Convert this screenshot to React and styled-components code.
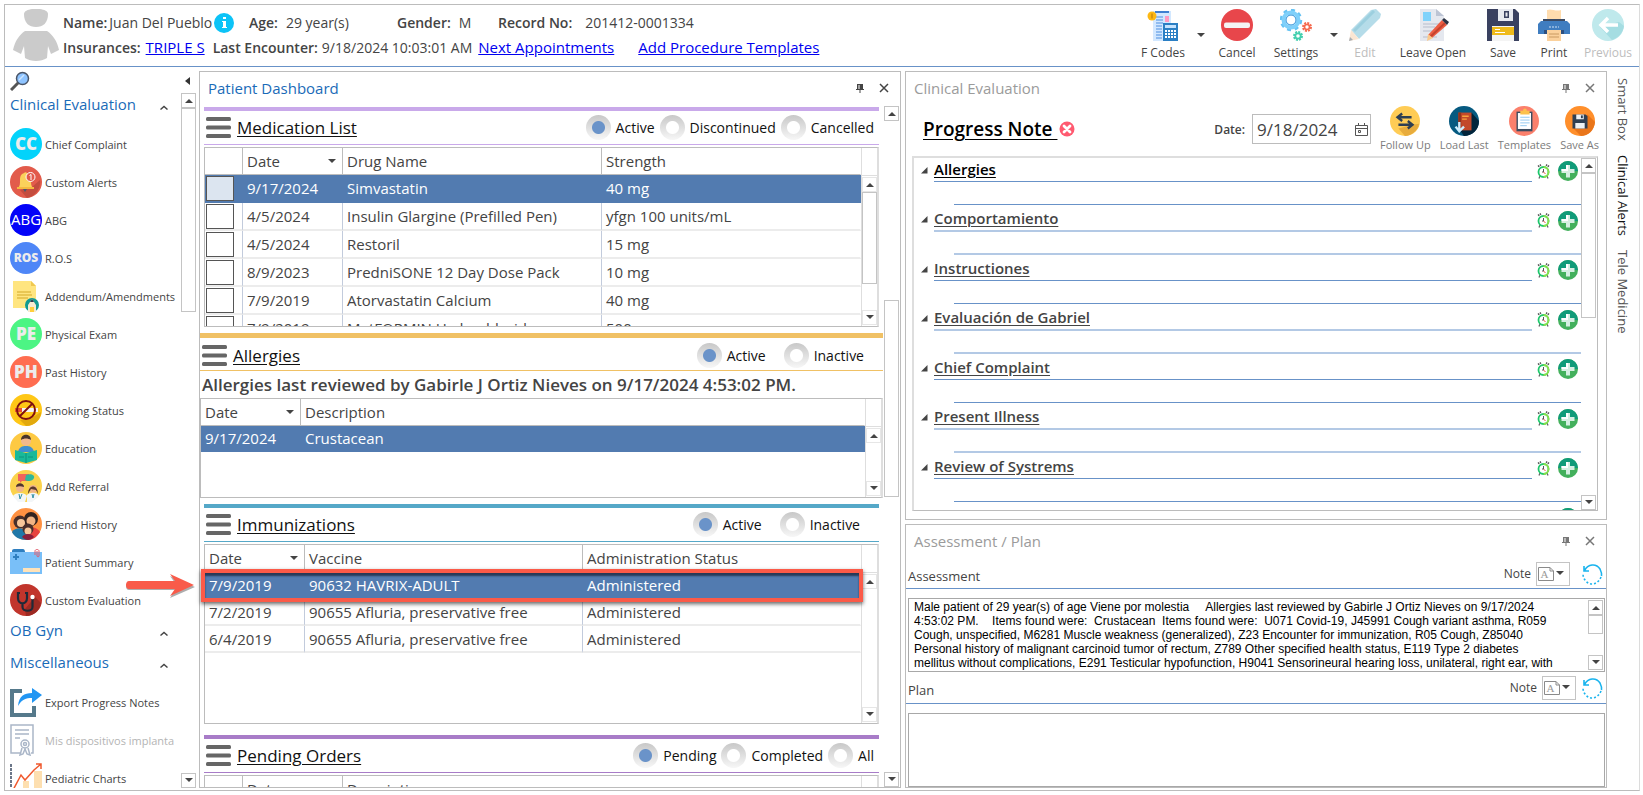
import React from 'react';
import styled, { createGlobalStyle, css } from 'styled-components';

const GlobalStyle = createGlobalStyle`
  * {
    box-sizing: border-box;
  }
  body {
    margin: 0;
    background: #fff;
    color: #444;
    font-family: 'Open Sans', 'Noto Sans', sans-serif;
    font-size: 15px;
  }
  button, input, textarea {
    font-family: inherit;
    color: inherit;
  }
  button {
    border: 0;
    padding: 0;
    background: none;
    cursor: pointer;
  }
  h1, h2, h3, p {
    margin: 0;
    font-weight: 400;
  }
  svg {
    display: block;
    flex: none;
  }
`;

const Page = styled.div`
  height: 100vh;
  padding: 4px 3px 4px 4px;
`;

const Frame = styled.div`
  height: 100%;
  display: flex;
  flex-direction: column;
  border: 1px solid #bcbcbc;
  border-right-color: #dcdcdc;
`;

/* ---------- header ---------- */

const Header = styled.header`
  display: flex;
  height: 62px;
  border-bottom: 1px solid #6892c8;
`;

const Avatar = styled.div`
  width: 58px;
  padding: 4px 0 0 8px;
`;

const Patient = styled.div`
  flex: 1;
  font-size: 15px;
  line-height: 25px;
  padding-top: 5px;
  white-space: nowrap;
`;

const PatientRow = styled.div`
  display: flex;
  align-items: center;
`;

const Field = styled.div`
  display: flex;
  align-items: center;
  gap: ${(props) => props.$gap || 0}px;
  width: ${(props) => (props.$width ? `${props.$width}px` : 'auto')};
  margin-right: ${(props) => props.$after || 0}px;
`;

const Label = styled.span`
  font-weight: 600;
  font-size: ${(props) => (props.$small ? 12 : 14)}px;
`;

const Value = styled.span`
  font-size: 14px;
`;

const Link = styled.a`
  color: #0000f0;
  font-size: 15px;
  margin-right: ${(props) => props.$after || 0}px;
`;

const Toolbar = styled.div`
  display: flex;
`;

const ToolButton = styled.button`
  width: ${(props) => props.$width}px;
  display: flex;
  flex-direction: column;
  align-items: center;
  padding-top: 4px;
  font-size: 12px;
  line-height: 24px;
  white-space: nowrap;
  color: ${(props) => (props.disabled ? '#bdbdbd' : '#444')};
`;

const CaretButton = styled.button`
  width: ${(props) => props.$width}px;
  display: flex;
  justify-content: center;
  padding-top: 28px;
`;

/* ---------- layout ---------- */

const Body = styled.div`
  flex: 1;
  min-height: 0;
  display: grid;
  grid-template-columns: 194px minmax(0, 1fr) 4px minmax(0, 1fr) 32px;
  grid-template-rows: minmax(0, 1fr);
  padding-bottom: 2px;
`;

const Column = styled.div`
  grid-column: ${(props) => props.$col};
  display: grid;
  grid-template-rows: ${(props) => props.$rows || 'minmax(0, 1fr)'};
  row-gap: 4px;
  padding-top: 4px;
`;

const Panel = styled.section`
  display: flex;
  flex-direction: column;
  min-height: 0;
  border: 1px solid #bcbcbc;
`;

const PanelTitle = styled.div`
  display: flex;
  align-items: center;
  height: ${(props) => props.$height || 34}px;
  padding: 0 11px 2px 8px;
  color: ${(props) => (props.$active ? '#1a6bb8' : '#9b9b9b')};

  h2 {
    flex: 1;
    font-size: 15px;
  }
  button {
    color: ${(props) => (props.$active ? '#444' : '#777')};
    margin-left: 14px;
  }
`;

/* ---------- scroll bar ---------- */

const Bar = styled.div`
  width: 15px;
  flex: none;
  display: flex;
  flex-direction: column;
`;

const BarButton = styled.button`
  height: 15px;
  flex: none;
  display: flex;
  align-items: center;
  justify-content: center;
  border: 1px solid ${(props) => (props.$soft ? '#e6e6e6' : '#c4c4c4')};
`;

const Track = styled.div`
  flex: ${(props) => props.$grow} 1 0;
`;

const Thumb = styled.div`
  flex: ${(props) => props.$grow} 1 0;
  border: 1px solid #c4c4c4;
  background: #fff;
`;

/* ---------- sidebar ---------- */

const Sidebar = styled.nav`
  display: flex;
  flex-direction: column;
  min-height: 0;
`;

const SidebarTop = styled.div`
  display: flex;
  justify-content: space-between;
  align-items: center;
  height: 26px;
  flex: none;
  padding: 2px 9px 0 5px;
`;

const SidebarBody = styled.div`
  flex: 1;
  min-height: 0;
  display: flex;
  padding-right: 3px;
`;

const SidebarList = styled.div`
  flex: 1;
  min-width: 0;
  overflow: hidden;
`;

const GroupTitle = styled.button`
  width: 100%;
  height: 32px;
  display: flex;
  justify-content: space-between;
  padding: 1px 13px 11px 5px;
  font-size: 15px;
  line-height: 20px;
  color: #1a6bb8;

  svg {
    margin-top: 11px;
  }
`;

const NavItem = styled.button`
  width: 100%;
  height: 38px;
  display: flex;
  align-items: center;
  gap: 3px;
  padding-left: 5px;
  font-size: 11px;
  white-space: nowrap;
  color: ${(props) => (props.disabled ? '#b4b4b4' : '#444')};
`;

/* ---------- dashboard ---------- */

const DashBody = styled.div`
  flex: 1;
  min-height: 0;
  display: flex;
`;

/* only the vertical overflow is cut, so that row markers can reach outside */
const DashContent = styled.div`
  flex: 1;
  min-width: 0;
  padding-top: 1px;
  overflow-x: visible;
  overflow-y: clip;
`;

const DashScroll = styled.div`
  display: flex;
  padding-right: 1px;
`;

const Section = styled.div`
  margin: ${(props) => (props.$wide ? '0 1px 6px 0' : '0 5px 6px 4px')};
  margin-bottom: ${(props) => props.$after || 6}px;
`;

const SectionHead = styled.div`
  display: flex;
  align-items: center;
  height: 38px;
  margin-bottom: ${(props) => (props.$wide ? 1 : 2)}px;
  padding: ${(props) => (props.$wide ? 3 : 0)}px
    ${(props) => (props.$loose ? 19 : 5)}px 0 2px;
  border-top: ${(props) => (props.$wide ? 5 : 4)}px solid
    ${(props) => props.$color};
  border-bottom: 1px solid ${(props) => props.$color};

  h3 {
    flex: 1;
    margin-left: 6px;
    font-size: 17px;
    color: #111;
    text-decoration: underline;
    text-underline-offset: 2px;
  }
`;

const Radios = styled.div`
  display: flex;
  gap: ${(props) => (props.$loose ? 18 : 5)}px;
`;

const RadioLabel = styled.label`
  display: flex;
  align-items: center;
  gap: 5px;
  font-size: 14px;
  color: #111;
`;

const Radio = styled.input.attrs({ type: 'radio' })`
  appearance: none;
  width: 25px;
  height: 25px;
  margin: 0;
  border-radius: 50%;
  background: radial-gradient(circle, #fff 6px, transparent 7px),
    linear-gradient(#c8c8c8, #f7f7f7);

  &:checked {
    background: radial-gradient(circle, #6a93c9 6px, transparent 7px),
      linear-gradient(#c8c8c8, #f7f7f7);
  }
`;

const Reviewed = styled.p`
  font-size: 17px;
  font-weight: 600;
  line-height: 26px;
  padding-left: 2px;
  white-space: nowrap;
`;

const GridBox = styled.div`
  display: flex;
  align-items: flex-start;
  height: ${(props) => props.$height}px;
  border: 1px solid #bcbcbc;
  border-right: 2px solid #dedede;
  overflow: ${(props) => (props.$open ? 'visible' : 'hidden')};
`;

const Table = styled.table`
  flex: 1;
  width: 0;
  table-layout: fixed;
  border-collapse: separate;
  border-spacing: 0;
  font-size: 15px;
`;

const Th = styled.th`
  width: ${(props) => (props.$width ? `${props.$width}px` : 'auto')};
  height: 27px;
  padding: 0 6px 0 4px;
  text-align: left;
  font-weight: 400;
  border-right: 1px solid #bcbcbc;
  border-bottom: 1px solid #bcbcbc;

  &:last-child {
    border-right-color: transparent;
  }
  div {
    display: flex;
    align-items: center;
    justify-content: space-between;
  }
`;

const Td = styled.td`
  height: ${(props) => props.$rowHeight}px;
  padding: 0 4px;
  line-height: 20px;
  white-space: nowrap;
  border-right: 1px solid #c2cbdc;
  border-bottom: 2px solid #ececec;

  &:last-child {
    border-right-color: transparent;
  }
`;

const Tr = styled.tr`
  position: relative;
  ${(props) =>
    props.$selected &&
    css`
      color: #fff;

      ${Td} {
        background: #527bb0;
        border-color: #527bb0;
      }
    `}
`;

const Check = styled.input.attrs({ type: 'checkbox' })`
  appearance: none;
  display: block;
  width: 28px;
  height: 25px;
  margin: 0 0 0 -3px;
  border: 1px solid #555;
  background: ${(props) => (props.$selected ? '#dce5f0' : '#fff')};
`;

const Rail = styled.div`
  width: 16px;
  height: 100%;
  display: flex;
  flex-direction: column;
  border-left: 1px solid #dedede;

  &::before {
    content: '';
    height: 27px;
    flex: none;
    border-bottom: 1px solid #dedede;
  }
  ${Bar} {
    flex: 1;
    padding: 1px 0;
  }
`;

const RowMark = styled.span`
  position: absolute;
  z-index: 2;
  inset: -3px -2px -3px -4px;
  border: 4px solid #fb5a48;
  box-shadow: 0 2px 4px rgba(0, 0, 0, 0.6),
    inset 0 3px 2px rgba(20, 30, 50, 0.7);
`;

const RowArrow = styled.svg`
  position: absolute;
  z-index: 2;
  right: calc(100% + 10px);
  top: 0;
`;

/* ---------- progress note ---------- */

const NoteHead = styled.div`
  display: flex;
  justify-content: space-between;
  height: 50px;
  padding: 0 7px 0 17px;
`;

const NoteTitle = styled.div`
  display: flex;
  align-items: center;
  gap: 2px;
  height: 46px;

  h1 {
    font-size: 19px;
    font-weight: 600;
    color: #000;
    text-decoration: underline;
    text-underline-offset: 3px;
    white-space: pre;
  }
`;

const NoteTools = styled.div`
  display: flex;
  gap: 9px;
`;

const DateLabel = styled.label`
  display: flex;
  align-items: center;
  height: 46px;
`;

const DateBox = styled.div`
  display: flex;
  align-items: center;
  width: 119px;
  height: 30px;
  margin: 8px 0 0 -2px;
  padding: 0 2px 0 4px;
  border: 1px solid #bcbcbc;

  input {
    flex: 1;
    width: 0;
    padding: 0;
    border: 0;
    outline: 0;
    font-size: 17px;
  }
`;

const RoundTool = styled.button`
  display: flex;
  flex-direction: column;
  align-items: center;
  font-size: 11px;
  line-height: 18px;
  color: #7c7c7c;
  white-space: nowrap;
`;

const Tree = styled.div`
  flex: 1;
  min-height: 0;
  display: flex;
  margin: 0 8px 8px 6px;
  padding-right: 1px;
  border: 1px solid #bcbcbc;
  border-top: 2px solid #dedede;
  border-left: 2px solid #dedede;
`;

const TreeList = styled.div`
  flex: 1;
  overflow: hidden;
`;

const TreeHead = styled.div`
  display: flex;
  height: 24px;

  > button {
    width: 20px;
    display: flex;
    align-items: center;
    justify-content: center;
  }
  h3 {
    flex: 1;
    font-size: 15px;
    font-weight: 600;
    line-height: 22px;
    text-decoration: underline;
    text-underline-offset: 2px;
    border-bottom: 1px solid #6892c8;
  }
`;

const TreeActions = styled.div`
  width: 49px;
  display: flex;
  align-items: center;
  justify-content: space-between;
  padding: 2px 3px 0 5px;
`;

const TreeBody = styled.div`
  height: 23px;
  margin-left: 40px;
  border-bottom: 1px solid #6892c8;
`;

const TreeItem = styled.div`
  padding-bottom: 2px;
  color: ${(props) => (props.$current ? '#000' : '#444')};

  &:nth-child(even) ${TreeHead} {
    height: 25px;
  }
  &:nth-child(even) h3,
  &:nth-child(even) ${TreeBody} {
    border-bottom: 2px solid #b3c9e5;
  }
`;

/* ---------- assessment ---------- */

const NoteBar = styled.div`
  display: flex;
  align-items: center;
  height: ${(props) => props.$height}px;
  padding: 0 3px 0 2px;
  border-bottom: 1px solid #6892c8;

  label {
    flex: 1;
    font-size: 13px;
    padding-top: 5px;
  }
  > span {
    font-size: 12px;
  }
`;

const NoteMenu = styled.button`
  display: flex;
  align-items: center;
  justify-content: space-between;
  width: 34px;
  height: 24px;
  margin: 0 ${(props) => props.$after}px 0 5px;
  padding: 0 5px 0 1px;
  border: 1px solid #c4c4c4;
`;

const NoteBox = styled.div`
  display: flex;
  height: 74px;
  margin: 9px 1px 0 2px;
  padding: 1px;
  border: 1px solid #a8a8a8;

  textarea {
    flex: 1;
    padding: 0 4px;
    border: 0;
    outline: 0;
    resize: none;
    overflow: hidden;
    color: #000;
    font-family: 'Liberation Sans', Arial, sans-serif;
    font-size: 12px;
    line-height: 14px;
    white-space: pre;
  }
`;

const SideTabs = styled.div`
  grid-column: 5;
  display: flex;
  flex-direction: column;
  align-items: center;
  gap: 14px;
  padding-top: 11px;
`;

const SideTab = styled.button`
  writing-mode: vertical-rl;
  font-size: 13px;
  line-height: 20px;
  color: ${(props) => (props.$current ? '#111' : '#555')};
`;

/* ---------- small glyphs ---------- */

const Caret = ({ up }) => (
  <svg width="8" height="5" viewBox="0 0 8 5">
    <path d={up ? 'M0 5 4 1l4 4z' : 'M0 0h8L4 4z'} fill="#444" />
  </svg>
);

const Pin = () => (
  <svg width="10" height="10" viewBox="0 0 10 10">
    <path d="M2 1h6v5h1v1H1V6h1zM4.500 7h1v3h-1z" fill="currentColor" />
    <path d="M3 2h2v4H3z" fill="#fff" opacity=".5" />
  </svg>
);

const Close = () => (
  <svg width="10" height="10" viewBox="0 0 10 10">
    <path d="m1 1 8 8M9 1 1 9" stroke="currentColor" strokeWidth="1.500" />
  </svg>
);

const Menu = () => (
  <svg width="25" height="22" viewBox="0 0 25 22" fill="#666">
    <rect width="25" height="4" rx="1.500" />
    <rect y="8.500" width="25" height="4" rx="1.500" />
    <rect y="17" width="25" height="4" rx="1.500" />
  </svg>
);

const AvatarIcon = () => (
  <svg width="46" height="52" viewBox="0 0 46 52" fill="#cbcbcb">
    <path d="M11 5c0-7 24-7 24 0 0 9-5 13-12 13S11 14 11 5z" />
    <path d="M12 22h22c6 4 10 10 12 19l-8 4-3-8-1 12c-6 4-16 4-22 0l-1-12-3 8-8-4c2-9 6-15 12-19z" />
  </svg>
);

const Info = () => (
  <svg width="20" height="20" viewBox="0 0 20 20">
    <circle cx="10" cy="10" r="10" fill="#0cc3f7" />
    <path d="M9 4h3v2H9zM8 8h4v6h1v1H8v-1h1V9H8z" fill="#fff" />
  </svg>
);

const SearchIcon = () => (
  <svg width="20" height="20" viewBox="0 0 20 20">
    <path d="M9 11 1 19" stroke="#555" strokeWidth="3" />
    <circle cx="12.500" cy="7.500" r="6" fill="#8fc4ff" stroke="#4a5568" strokeWidth="1.500" />
    <path d="m9 9 5-5" stroke="#cfe6ff" strokeWidth="1.500" />
  </svg>
);

const Calendar = () => (
  <svg width="13" height="13" viewBox="0 0 13 13" fill="none" stroke="#555">
    <path d="M.5 2.500h12v10H.5zM.5 5.500h12M3.500 0v3M9.500 0v3M3.500 7.500h2v2h-2z" />
  </svg>
);

const RedCross = () => (
  <svg width="16" height="16" viewBox="0 0 16 16">
    <circle cx="8" cy="8" r="7.500" fill="#ff5a70" />
    <path d="m5 5 6 6M11 5l-6 6" stroke="#fff" strokeWidth="2.800" strokeLinecap="round" />
  </svg>
);

const Clock = () => (
  <svg width="13" height="15" viewBox="0 0 13 15">
    <path d="M1 2.500 4 .8M12 2.500 9 .8" stroke="#555" strokeWidth="1.800" strokeDasharray="1.500 .7" />
    <path d="m3 12-1 2.500M10 12l1 2.500" stroke="#666" strokeWidth="1.300" />
    <circle cx="6.500" cy="8" r="5" fill="#fff" stroke="#1dc76b" strokeWidth="1.800" />
    <path d="M6.500 3a5 5 0 0 1 0 10" fill="none" stroke="#8be04a" strokeWidth="1.800" />
    <path d="M6.500 5v3H5" fill="none" stroke="#555" />
    <path d="m6.500 8 2 2" stroke="#e8573f" />
  </svg>
);

const Plus = () => (
  <svg width="20" height="20" viewBox="0 0 20 20">
    <circle cx="10" cy="10" r="10" fill="#43b05c" />
    <path d="M0 10a10 10 0 0 1 20 0z" fill="#109b79" />
    <path d="M8 4h4v4h4.500v4H12v4.500H8V12H3.500V8H8z" fill="#d5efe2" />
    <path d="M8 4h2v6H3.500V8H8z" fill="#fff" />
  </svg>
);

const Twisty = () => (
  <svg width="7" height="7" viewBox="0 0 7 7">
    <path d="M6.500 0v6.500H0z" fill="#444" />
  </svg>
);

const NotePage = () => (
  <svg width="17" height="14" viewBox="0 0 17 14" fill="none" stroke="#8a8a8a">
    <path d="M.5.5H12l3.500 3.500v9.500H.5zM12 .5V4h3.500" />
    <text x="2.500" y="11" fontFamily="Liberation Serif" fontSize="11" fill="#999" stroke="none">A</text>
  </svg>
);

const Redo = () => (
  <svg width="21" height="22" viewBox="0 0 21 22" fill="none" stroke="#1ab4ee" strokeWidth="1.600">
    <path d="M2 3v5h5M2.500 7.500C6 1 14 0 18 6c1 2 2 4 1.500 7" />
    <path d="M19 14c-2 5-6 7-9 7-5 0-9-5-9-10" strokeDasharray="2 2" />
  </svg>
);

const Fold = () => (
  <svg width="8" height="5" viewBox="0 0 8 5">
    <path d="m.5 4.500 3.500-3 3.500 3" fill="none" stroke="#444" strokeWidth="1.400" />
  </svg>
);

/* ---------- pictures on the buttons ---------- */

const Lettered = ({ fill, children, size = 15, weight = 800, color = '#ececec' }) => (
  <>
    <circle cx="16" cy="16" r="16" fill={fill} />
    <text x="16" y={16 + size * 0.36} fontSize={size} fontWeight={weight} fill={color} textAnchor="middle">
      {children}
    </text>
  </>
);

const art = {
  cc: <Lettered fill="#03d3fb" size={17}>CC</Lettered>,
  alerts: (
    <>
      <circle cx="16" cy="16" r="16" fill="#e25b4b" />
      <path d="m22 21 8-7a16 16 0 0 1-13 18l-7-8z" fill="#c44c3e" />
      <path d="M8 22c2-2 2-4 2-8 0-5 2-6 4-7 1-1 2-1 3 0 3 1 4 3 4 7s0 6 2 8z" fill="#fbd15b" />
      <path d="M7 21h17v2H7z" fill="#f5b93f" />
      <path d="M13 23h4l-2 3z" fill="#4b5a6b" />
      <circle cx="20.500" cy="11" r="4.500" fill="#e25b4b" stroke="#fff" />
      <path d="M19.500 9.500 21 8.500V14" fill="none" stroke="#fff" />
    </>
  ),
  abg: <Lettered fill="#0303f8" size={15} weight={400} color="#fff">ABG</Lettered>,
  ros: <Lettered fill="#4e86f7" size={12}>ROS</Lettered>,
  addendum: (
    <>
      <path d="M3 1h18l5 5v22H3z" fill="#ffe580" />
      <path d="M21 1v5h5z" fill="#f0c850" />
      <path d="M7 12h14M7 15h15M7 18h11" stroke="#d4a928" strokeWidth="1.200" />
      <circle cx="22" cy="25" r="7" fill="#119a92" />
      <path d="m22 19 4 6v7h-8v-7z" fill="#f7ead0" />
      <path d="m22 19 2 3h-4z" fill="#2d3e50" />
      <path d="M20 27h4v5h-4z" fill="#ffcf3d" />
    </>
  ),
  pe: <Lettered fill="#4cf584" size={17}>PE</Lettered>,
  ph: <Lettered fill="#ff6d50" size={17}>PH</Lettered>,
  smoking: (
    <>
      <circle cx="16" cy="16" r="16" fill="#ffc716" />
      <path d="m23 23 8-5c0 8-7 14-15 14l-6-6z" fill="#e2a90d" />
      <path d="M11 14h17v4H11z" fill="#f4f4f4" />
      <path d="M5 14h7v4H5z" fill="#e8502f" />
      <circle cx="16" cy="16" r="9" fill="none" stroke="#7f1010" strokeWidth="2" />
      <path d="m22 10-12 12" stroke="#7f1010" strokeWidth="2" />
    </>
  ),
  education: (
    <>
      <circle cx="16" cy="16" r="16" fill="#fdc943" />
      <path d="M8 20c1-5 4-6 8-6s7 1 8 6z" fill="#3f8fd0" />
      <circle cx="16" cy="9" r="5" fill="#f3b98c" />
      <path d="M11 8c0-7 10-7 10 0-3-2-7-2-10 0z" fill="#4a352c" />
      <path d="m5 18 11 3 11-3v10l-11 3-11-3z" fill="#19b99a" />
      <path d="M16 21v10M14 25H9M18 25h5" stroke="#0d947a" />
    </>
  ),
  referral: (
    <>
      <circle cx="16" cy="16" r="16" fill="#fbd24c" />
      <path d="M8 4h11v7H12l-2 2v-2H8z" fill="#f0635c" />
      <path d="M16 5c5-2 9 0 8 3s-6 4-9 2z" fill="#2fb79b" />
      <circle cx="10" cy="18" r="4" fill="#f0b58a" />
      <path d="M6 17c0-5 8-5 8 0-3-1-5-1-8 0z" fill="#4e342e" />
      <circle cx="23" cy="19" r="4" fill="#f0b58a" />
      <path d="M18 24c0-10 10-10 10 0l-2-4-5-1z" fill="#5b3a2e" />
      <path d="M3 26c2-4 12-4 14 0l-2 6H8zM17 25c3-3 10-3 12 1l-7 6h-5z" fill="#f3f6f8" />
      <path d="m9 24 1 5 2-5M22 24l1 4 1-4" stroke="#3290a5" fill="none" />
    </>
  ),
  friend: (
    <>
      <circle cx="16" cy="16" r="16" fill="#ff9142" />
      <circle cx="10" cy="14" r="6.500" fill="#4a2f2b" />
      <circle cx="21" cy="11" r="7" fill="#33231f" />
      <circle cx="11" cy="15" r="4" fill="#f8c79a" />
      <circle cx="21" cy="13" r="4.500" fill="#f1b484" />
      <path d="M2 24c3-5 12-5 15 0v8C10 32 4 29 2 24z" fill="#2078a8" />
      <path d="M17 22c4-4 10-3 13 2-3 5-7 8-13 8z" fill="#e7443f" />
      <circle cx="18" cy="21" r="5.500" fill="#4a2f2b" />
      <circle cx="18" cy="23" r="3.500" fill="#f8c79a" />
      <path d="M12 29c2-4 10-4 12 0-4 4-8 4-12 0z" fill="#8a1f3c" />
    </>
  ),
  summary: (
    <>
      <path d="M2 5c0-2 2-2 3-2h8c1 0 2 1 2 3v3H2z" fill="#2f7fc0" />
      <path d="M0 6h32v22H0z" fill="#79bff8" />
      <path d="M3 11h6M6 8v6" stroke="#2f7fc0" strokeWidth="2" />
      <path d="M13 22h17v4H13z" fill="#ffe2b8" />
      <path d="M25 9V5c0-2 4-2 4 0v5c0 1-2 1-2 0V5" fill="none" stroke="#e25b6b" />
    </>
  ),
  custom: (
    <>
      <circle cx="16" cy="16" r="16" fill="#c1352c" />
      <path d="m15 25 10-12 6 6c-1 7-7 13-15 13z" fill="#9c2a23" />
      <path d="M10 9H8v5c0 7 9 7 9 0V9h-2M12.500 19v4c0 5 10 5 10 0v-8" fill="none" stroke="#1f2a38" strokeWidth="2.200" />
      <circle cx="22.500" cy="13" r="2.200" fill="#fff" />
    </>
  ),
  exportNotes: (
    <>
      <path d="M12 5H2v24h22v-9" fill="none" stroke="#55798b" strokeWidth="4" />
      <path d="M8 20C9 10 14 7 22 7V2l10 7-10 8v-5c-6 0-10 1-14 8z" fill="#2196f3" />
    </>
  ),
  device: (
    <g fill="none" stroke="#aab6c8" strokeWidth="1.500">
      <path d="M11 29H1V1h22v28h-2M5 6h14M5 10h14M5 14h5" />
      <circle cx="15" cy="20" r="4" />
      <circle cx="15" cy="20" r="1.500" />
      <path d="m12 24-2 7 3-1 2-5 2 5 3 1-2-7" />
    </g>
  ),
  charts: (
    <>
      <path d="M13 19h6v13h-6zM24 9h8v23h-8z" fill="#fddfb0" />
      <path d="M1 2v30" stroke="#3b4a63" strokeDasharray="3 1" strokeWidth="1.500" />
      <path d="m2 30 9-17 4 5L24 8l7-6M26 2h5v5" fill="none" stroke="#f0592e" strokeWidth="1.500" />
    </>
  ),
  fcodes: (
    <>
      <path d="M6 2h18v30H6z" fill="#d3e8ff" />
      <path d="M8 3h14" stroke="#3f7fd0" strokeWidth="2" />
      <path d="M9 8h7M9 11h7M9 14h7M9 17h6M9 20h6M9 23h6M9 26h6M9 29h6" stroke="#4c8fe0" />
      <path d="M18 7h4v6h-4z" fill="#ff9ac0" />
      <circle cx="5" cy="7" r="4.500" fill="#fdb813" />
      <path d="M5 4.500v5" stroke="#b97708" />
      <path d="M16 14h15v18H16z" fill="#2b7fc4" />
      <path d="M18 16h11v3H18z" fill="#c5e3ff" />
      <path d="M18 22h11M18 25h11M18 28h11" stroke="#fff" strokeWidth="2" strokeDasharray="2 1" />
    </>
  ),
  cancel: (
    <>
      <circle cx="16" cy="16" r="16" fill="#e8464b" />
      <rect x="3" y="13.500" width="26" height="5.500" rx="2" fill="#f4f4f4" />
    </>
  ),
  settings: (
    <g fill="none">
      <circle cx="11" cy="11" r="10" stroke="#67c3f3" strokeWidth="2.500" strokeDasharray="4 3.800" />
      <circle cx="11" cy="11" r="7.500" stroke="#7fd0fa" strokeWidth="4" />
      <circle cx="11" cy="11" r="5" stroke="#2a8fd8" />
      <circle cx="27" cy="18" r="4" stroke="#f5694e" strokeWidth="2" strokeDasharray="2 1.100" />
      <circle cx="27" cy="18" r="2.500" stroke="#f5694e" strokeWidth="1.600" />
      <circle cx="18" cy="27" r="4" stroke="#43cfae" strokeWidth="2" strokeDasharray="2 1.100" />
      <circle cx="18" cy="27" r="2.700" stroke="#43cfae" strokeWidth="1.800" />
    </g>
  ),
  edit: (
    <>
      <path d="m2 21 8 9L31 9l1-4-5-5-5 1z" fill="#b5dce9" />
      <path d="m5 22 20-20" stroke="#9ccfdf" strokeWidth="3" />
      <path d="m2 21 8 9-10 2z" fill="#fbe6d3" />
      <path d="m1 28 3 3-4 1z" fill="#a8aeb4" />
    </>
  ),
  leaveOpen: (
    <>
      <path d="M3 0h16l8 7v25H3z" fill="#e5e8ef" />
      <path d="M19 0v7h8z" fill="#bcc4d4" />
      <path d="M6 3h8v9H6z" fill="#7fd2fb" />
      <path d="M6 18h12M6 22h9M6 28h14M6 15h16" stroke="#b7bdcc" />
      <path d="m11 26 14-15 5 5-15 13z" fill="#ed5d43" />
      <path d="m13 28 15-14" stroke="#c3432f" strokeWidth="2" />
      <path d="m25 11 2-2 5 4-2 3z" fill="#2d3344" />
      <path d="m11 25 5 4-6 3z" fill="#fbc98c" />
    </>
  ),
  save: (
    <>
      <path d="M0 0h28l4 4v28H0z" fill="#3a4160" />
      <path d="M6 0h20v12H6z" fill="#e8eaf0" />
      <path d="M6 0h5v12H6zM17 2h5v7h-5z" fill="#3a4160" />
      <path d="M18.500 3.500h2v4h-2z" fill="#e8eaf0" />
      <path d="M5 17h22v15H5z" fill="#f4f4f4" />
      <path d="M5 18h22v8H5z" fill="#efba1a" />
      <path d="M8 20.500h5M8 23.500h10" stroke="#fff" />
    </>
  ),
  print: (
    <>
      <path d="M9 1c5-2 8 2 14 0v12H9z" fill="#ffdcae" />
      <path d="M5 10h22v6H5z" fill="#3b4a63" />
      <path d="M3 12h26l3 3v10H0V15z" fill="#3f7dc0" />
      <path d="M6 21h20v4H6z" fill="#2c4f80" />
      <path d="M9 21h14v11H9z" fill="#fbd19c" />
      <path d="M11 18h10" stroke="#cfe2f5" strokeDasharray="2 1" />
      <path d="M11 25h10M11 28h10" stroke="#c99a63" />
    </>
  ),
  previous: (
    <>
      <circle cx="16" cy="16" r="16" fill="#bfe9ec" />
      <path d="m8 18 12 13c6-2 11-7 12-14l-5-4z" fill="#a5dde2" />
      <path d="M26 16H10M16 9l-7 7 7 7" fill="none" stroke="#fff" strokeWidth="3.500" />
    </>
  ),
  followUp: (
    <>
      <circle cx="16" cy="16" r="16" fill="#ffcc55" />
      <path d="m24 20 7-1c-1 7-8 13-15 13l-7-8z" fill="#e8ac3d" />
      <path d="M23 12H10M13 8l-5 4 5 4M9 20h13M19 16l5 4-5 4" fill="none" stroke="#2f3f52" strokeWidth="2.500" />
    </>
  ),
  loadLast: (
    <>
      <circle cx="16" cy="16" r="16" fill="#065a80" />
      <path d="m24 7 8 9c0 9-7 16-16 16l-4-6z" fill="#02253b" />
      <path d="M10 7h14v19H10z" fill="#c2492a" />
      <path d="M10 7h3v19h-3z" fill="#92331b" />
      <path d="M14 11h7M14 14h5" stroke="#f9a33c" strokeWidth="1.500" />
      <path d="M11 17v8M7 22l4 5 5-5" fill="none" stroke="#cdefff" strokeWidth="2.500" />
    </>
  ),
  templates: (
    <>
      <circle cx="16" cy="16" r="16" fill="#fb806c" />
      <path d="M8 6h17v21H8z" fill="#3c4c60" />
      <path d="M9.500 7.500h14v17h-14z" fill="#fff" />
      <path d="M12 12h10M12 15h10M12 18h10M12 21h7" stroke="#8ec7f0" />
      <path d="M12 5h3c0-3 4-3 4 0h3v4H12z" fill="#fdc14c" />
    </>
  ),
  saveAs: (
    <>
      <circle cx="16" cy="16" r="16" fill="#ff8f2b" />
      <path d="m24 9 8 8c-1 9-7 15-15 15l-8-8z" fill="#e9751a" />
      <path d="M8 9h14l2 2v13H8z" fill="#2f3f52" />
      <path d="M12 9h8v5h-8zM11 18h10v6H11z" fill="#edf1f4" />
      <path d="M17 10h2v3h-2z" fill="#2f3f52" />
    </>
  ),
};

const Art = ({ name, size = 32 }) => (
  <svg width={size} height={size} viewBox="0 0 32 32">
    {art[name]}
  </svg>
);

/* ---------- data ---------- */

const groups = [
  {
    title: 'Clinical Evaluation',
    items: [
      ['cc', 'Chief Complaint'],
      ['alerts', 'Custom Alerts'],
      ['abg', 'ABG'],
      ['ros', 'R.O.S'],
      ['addendum', 'Addendum/Amendments'],
      ['pe', 'Physical Exam'],
      ['ph', 'Past History'],
      ['smoking', 'Smoking Status'],
      ['education', 'Education'],
      ['referral', 'Add Referral'],
      ['friend', 'Friend History'],
      ['summary', 'Patient Summary'],
      ['custom', 'Custom Evaluation'],
    ],
  },
  { title: 'OB Gyn', items: [] },
  {
    title: 'Miscellaneous',
    items: [
      ['exportNotes', 'Export Progress Notes'],
      ['device', 'Mis dispositivos implanta', true],
      ['charts', 'Pediatric Charts'],
    ],
  },
];

const medications = [
  ['9/17/2024', 'Simvastatin', '40 mg'],
  ['4/5/2024', 'Insulin Glargine (Prefilled Pen)', 'yfgn 100 units/mL'],
  ['4/5/2024', 'Restoril', '15 mg'],
  ['8/9/2023', 'PredniSONE 12 Day Dose Pack', '10 mg'],
  ['7/9/2019', 'Atorvastatin Calcium', '40 mg'],
  ['7/9/2019', 'MetFORMIN Hydrochloride', '500 mg'],
];

const immunizations = [
  ['7/9/2019', '90632 HAVRIX-ADULT', 'Administered'],
  ['7/2/2019', '90655 Afluria, preservative free', 'Administered'],
  ['6/4/2019', '90655 Afluria, preservative free', 'Administered'],
];

const noteSections = [
  'Allergies',
  'Comportamiento',
  'Instructiones',
  'Evaluación de Gabriel',
  'Chief Complaint',
  'Present Illness',
  'Review of Systrems',
  'Family History',
];

const assessment = [
  'Male patient of 29 year(s) of age Viene por molestia     Allergies last reviewed by Gabirle J Ortiz Nieves on 9/17/2024',
  '4:53:02 PM.    Items found were:  Crustacean  Items found were:  U071 Covid-19, J45991 Cough variant asthma, R059',
  'Cough, unspecified, M6281 Muscle weakness (generalized), Z23 Encounter for immunization, R05 Cough, Z85040',
  'Personal history of malignant carcinoid tumor of rectum, Z789 Other specified health status, E119 Type 2 diabetes',
  'mellitus without complications, E291 Testicular hypofunction, H9041 Sensorineural hearing loss, unilateral, right ear, with',
].join('\n');

/* ---------- components ---------- */

const ScrollBar = ({ before = 0, thumb = 0, after = 1, soft }) => (
  <Bar>
    <BarButton $soft={soft} aria-label="Scroll up">
      <Caret up />
    </BarButton>
    {before > 0 && <Track $grow={before} />}
    {thumb > 0 && <Thumb $grow={thumb} />}
    <Track $grow={after} />
    <BarButton $soft={soft} aria-label="Scroll down">
      <Caret />
    </BarButton>
  </Bar>
);

const PanelHeader = ({ title, active, height }) => (
  <PanelTitle $active={active} $height={height}>
    <h2>{title}</h2>
    <button aria-label="Pin panel">
      <Pin />
    </button>
    <button aria-label="Close panel">
      <Close />
    </button>
  </PanelTitle>
);

const SectionHeader = ({ title, color, options, loose, wide }) => (
  <SectionHead $color={color} $loose={loose} $wide={wide}>
    <button aria-label={`${title} menu`}>
      <Menu />
    </button>
    <h3>{title}</h3>
    <Radios $loose={loose}>
      {options.map((option, i) => (
        <RadioLabel key={option}>
          <Radio name={title} defaultChecked={i === 0} />
          {option}
        </RadioLabel>
      ))}
    </Radios>
  </SectionHead>
);

const DataGrid = ({ columns, rows, height, rowHeight = 26, checks, marked, scroll }) => (
  <GridBox $height={height} $open={marked}>
    <Table>
      <thead>
        <tr>
          {checks && <Th $width={38} aria-label="Select" />}
          {columns.map((name, i) => (
            <Th key={name} $width={i === 0 ? 100 : undefined}>
              <div>
                {name}
                {i === 0 && <Caret />}
              </div>
            </Th>
          ))}
        </tr>
      </thead>
      <tbody>
        {rows.map((row, r) => (
          <Tr key={r} $selected={r === 0}>
            {checks && (
              <Td $rowHeight={rowHeight}>
                <Check $selected={r === 0} aria-label={`Select ${row[1]}`} />
              </Td>
            )}
            {row.map((cell, i) => (
              <Td key={i} $rowHeight={rowHeight}>
                {cell}
                {marked && r === 0 && i === 0 && (
                  <>
                    <RowMark />
                    <RowArrow width="70" height="27" viewBox="0 0 70 27">
                      <path d="M4 11h46L45 4l25 11-25 11 5-8H4c-4 0-4-7 0-7z" fill="#777" opacity=".6" />
                      <path d="M4 9h46L45 2l24 11-24 11 5-7H4c-4 0-4-8 0-8z" fill="#f95b4a" />
                    </RowArrow>
                  </>
                )}
              </Td>
            ))}
          </Tr>
        ))}
      </tbody>
    </Table>
    <Rail>{scroll}</Rail>
  </GridBox>
);

const NoteEditor = ({ id, title, height, after, value, scroll }) => (
  <>
    <NoteBar $height={height}>
      <label htmlFor={id}>{title}</label>
      <span>Note</span>
      <NoteMenu $after={after} aria-label={`${title} note template`}>
        <NotePage />
        <Caret />
      </NoteMenu>
      <button aria-label={`Reload ${title}`}>
        <Redo />
      </button>
    </NoteBar>
    <NoteBox>
      <textarea id={id} defaultValue={value} />
      {scroll}
    </NoteBox>
  </>
);

const App = () => {
  return (
    <Page>
      <GlobalStyle />
      <Frame>
        <Header>
          <Avatar>
            <AvatarIcon />
          </Avatar>
          <Patient>
            <PatientRow>
              <Field $width={186} $gap={2}>
                <Label>Name:</Label>
                <Value>Juan Del Pueblo</Value>
                <Info />
              </Field>
              <Field $width={148} $gap={8}>
                <Label>Age:</Label>
                <Value>29 year(s)</Value>
              </Field>
              <Field $width={101} $gap={8}>
                <Label>Gender:</Label>
                <Value>M</Value>
              </Field>
              <Field $gap={13}>
                <Label>Record No:</Label>
                <Value>201412-0001334</Value>
              </Field>
            </PatientRow>
            <PatientRow>
              <Field $gap={5} $after={8}>
                <Label>Insurances:</Label>
                <Link href="#insurance">TRIPLE S</Link>
              </Field>
              <Field $gap={4} $after={6}>
                <Label>Last Encounter:</Label>
                <Value>9/18/2024 10:03:01 AM</Value>
              </Field>
              <Link href="#appointments" $after={24}>Next Appointments</Link>
              <Link href="#templates">Add Procedure Templates</Link>
            </PatientRow>
          </Patient>
          <Toolbar>
            <ToolButton $width={56}><Art name="fcodes" />F Codes</ToolButton>
            <CaretButton $width={20} aria-label="More codes"><Caret /></CaretButton>
            <ToolButton $width={52}><Art name="cancel" />Cancel</ToolButton>
            <ToolButton $width={66}><Art name="settings" />Settings</ToolButton>
            <CaretButton $width={10} aria-label="More settings"><Caret /></CaretButton>
            <ToolButton $width={52} disabled><Art name="edit" />Edit</ToolButton>
            <ToolButton $width={84}><Art name="leaveOpen" />Leave Open</ToolButton>
            <ToolButton $width={56}><Art name="save" />Save</ToolButton>
            <ToolButton $width={46}><Art name="print" />Print</ToolButton>
            <ToolButton $width={62} disabled><Art name="previous" />Previous</ToolButton>
          </Toolbar>
        </Header>

        <Body>
          <Sidebar>
            <SidebarTop>
              <button aria-label="Search">
                <SearchIcon />
              </button>
              <button aria-label="Collapse sidebar">
                <svg width="5" height="8" viewBox="0 0 5 8">
                  <path d="M5 0v8L0 4z" fill="#333" />
                </svg>
              </button>
            </SidebarTop>
            <SidebarBody>
              <SidebarList>
                {groups.map((group) => (
                  <div key={group.title}>
                    <GroupTitle>
                      {group.title}
                      <Fold />
                    </GroupTitle>
                    {group.items.map(([icon, label, disabled]) => (
                      <NavItem key={label} disabled={disabled}>
                        <Art name={icon} />
                        {label}
                      </NavItem>
                    ))}
                  </div>
                ))}
              </SidebarList>
              <ScrollBar thumb={202} after={462} />
            </SidebarBody>
          </Sidebar>

          <Column $col={2}>
            <Panel>
              <PanelHeader title="Patient Dashboard" active />
              <DashBody>
                <DashContent>
                  <Section>
                    <SectionHeader
                      title="Medication List"
                      color="#c9a9ea"
                      options={['Active', 'Discontinued', 'Cancelled']}
                    />
                    <DataGrid
                      checks
                      height={180}
                      rowHeight={28}
                      columns={['Date', 'Drug Name', 'Strength']}
                      rows={medications}
                      scroll={<ScrollBar soft thumb={93} after={27} />}
                    />
                  </Section>
                  <Section $wide>
                    <SectionHeader
                      title="Allergies"
                      color="#f0c165"
                      options={['Active', 'Inactive']}
                      loose
                      wide
                    />
                    <Reviewed>
                      Allergies last reviewed by Gabirle J Ortiz Nieves on 9/17/2024 4:53:02 PM.
                    </Reviewed>
                    <DataGrid
                      height={100}
                      columns={['Date', 'Description']}
                      rows={[['9/17/2024', 'Crustacean']]}
                      scroll={<ScrollBar soft />}
                    />
                  </Section>
                  <Section $after={11}>
                    <SectionHeader
                      title="Immunizations"
                      color="#55a8c8"
                      options={['Active', 'Inactive']}
                      loose
                    />
                    <DataGrid
                      marked
                      height={180}
                      rowHeight={27}
                      columns={['Date', 'Vaccine', 'Administration Status']}
                      rows={immunizations}
                      scroll={<ScrollBar soft />}
                    />
                  </Section>
                  <Section>
                    <SectionHeader
                      title="Pending Orders"
                      color="#a87cc8"
                      options={['Pending', 'Completed', 'All']}
                    />
                    <DataGrid checks height={100} columns={['Date', 'Description']} rows={[]} />
                  </Section>
                </DashContent>
                <DashScroll>
                  <ScrollBar before={180} thumb={195} after={276} />
                </DashScroll>
              </DashBody>
            </Panel>
          </Column>

          <Column $col={4} $rows="minmax(0, 1fr) 264px">
            <Panel>
              <PanelHeader title="Clinical Evaluation" />
              <NoteHead>
                <NoteTitle>
                  <h1>{'Progress Note '}</h1>
                  <RedCross />
                </NoteTitle>
                <NoteTools>
                  <DateLabel htmlFor="note-date">
                    <Label $small>Date:</Label>
                  </DateLabel>
                  <DateBox>
                    <input id="note-date" defaultValue="9/18/2024" />
                    <button aria-label="Open calendar">
                      <Calendar />
                    </button>
                  </DateBox>
                  <RoundTool><Art name="followUp" size={30} />Follow Up</RoundTool>
                  <RoundTool><Art name="loadLast" size={30} />Load Last</RoundTool>
                  <RoundTool><Art name="templates" size={30} />Templates</RoundTool>
                  <RoundTool><Art name="saveAs" size={30} />Save As</RoundTool>
                </NoteTools>
              </NoteHead>
              <Tree>
                <TreeList>
                  {noteSections.map((name, i) => (
                    <TreeItem key={name} $current={i === 0}>
                      <TreeHead>
                        <button aria-label={`Collapse ${name}`}>
                          <Twisty />
                        </button>
                        <h3>{name}</h3>
                        <TreeActions>
                          <button aria-label={`${name} history`}>
                            <Clock />
                          </button>
                          <button aria-label={`Add to ${name}`}>
                            <Plus />
                          </button>
                        </TreeActions>
                      </TreeHead>
                      <TreeBody />
                    </TreeItem>
                  ))}
                </TreeList>
                <ScrollBar thumb={143} after={178} />
              </Tree>
            </Panel>
            <Panel>
              <PanelHeader title="Assessment / Plan" />
              <NoteEditor
                id="assessment"
                title="Assessment"
                height={30}
                after={12}
                value={assessment}
                scroll={<ScrollBar thumb={18} after={22} />}
              />
              <NoteEditor id="plan" title="Plan" height={32} after={6} value="" />
            </Panel>
          </Column>

          <SideTabs>
            <SideTab>Smart Box</SideTab>
            <SideTab $current>Clinical Alerts</SideTab>
            <SideTab>Tele Medicine</SideTab>
          </SideTabs>
        </Body>
      </Frame>
    </Page>
  );
};

export default App;
